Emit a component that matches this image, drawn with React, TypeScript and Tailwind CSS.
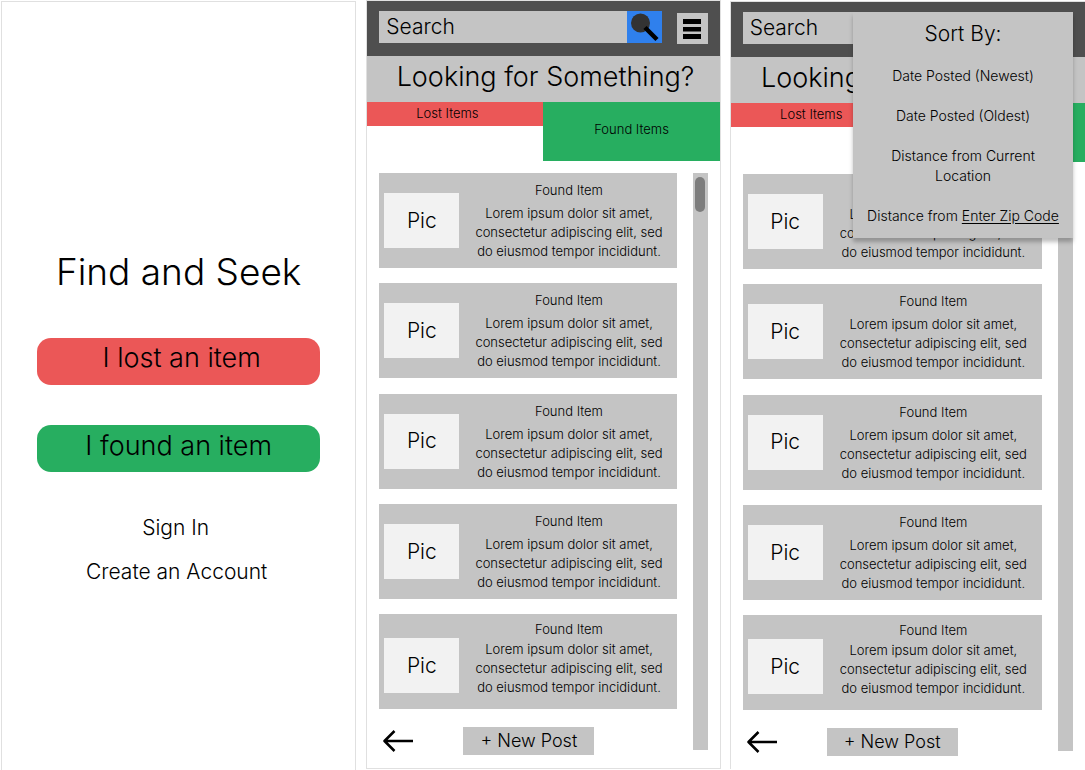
import type { ReactNode } from "react";

type Density = "regular" | "compact";

const items: { id: number; density: Density }[] = [
  { id: 1, density: "regular" },
  { id: 2, density: "regular" },
  { id: 3, density: "regular" },
  { id: 4, density: "regular" },
  { id: 5, density: "compact" },
];

function Frame({ label, className = "", children }: { label: string; className?: string; children: ReactNode }) {
  return (
    <section
      aria-label={label}
      className={`relative flex min-w-0 flex-col border-l border-t border-[#e0e0e0] bg-white ${className}`}
    >
      {children}
    </section>
  );
}

function SearchIcon() {
  return (
    <svg viewBox="0 0 35 32" className="h-8 w-[35px]" aria-hidden="true">
      <circle cx="13.500" cy="12" r="9.5" fill="#333333" />
      <path d="M18 16.500L30 28.500" stroke="#000000" strokeWidth="4.500" />
    </svg>
  );
}

function MenuIcon() {
  return (
    <svg viewBox="0 0 18 20" className="h-5 w-[18px]" aria-hidden="true">
      <path d="M0 0h18v5H0zM0 8h18v4.500H0zM0 15h18v5H0z" fill="#000000" />
    </svg>
  );
}

function BackIcon() {
  return (
    <svg
      viewBox="0 0 30 22"
      className="h-[22px] w-[30px]"
      fill="none"
      stroke="#000000"
      strokeWidth="2.500"
      strokeLinejoin="round"
      aria-hidden="true"
    >
      <path d="M30 11H1.500M11.500 1L1.500 11L11.500 21" />
    </svg>
  );
}

function ItemCard({ density }: { density: Density }) {
  const compact = density === "compact";
  return (
    <li className="flex h-[95px] items-start bg-[#c4c4c4] pl-[5px]">
      <div
        className={`flex h-[55px] w-[75px] shrink-0 items-center justify-center bg-[#f2f2f2] text-[21px] ${
          compact ? "mt-6" : "mt-5"
        }`}
      >
        Pic
      </div>
      <div className={`min-w-0 grow pl-0.5 text-center text-[13px] leading-[19px] ${compact ? "pt-1.5" : "pt-2"}`}>
        <h3>Found Item</h3>
        <p className={compact ? "mt-px" : "mt-1"}>
          Lorem ipsum dolor sit amet,
          <br />
          consectetur adipiscing elit, sed
          <br />
          do eiusmod tempor incididunt.
        </p>
      </div>
    </li>
  );
}

function Listing({ id, thumb }: { id: string; thumb: boolean }) {
  return (
    <>
      <header className="flex h-[55px] items-center bg-[#4f4f4f] px-3">
        <form className="mb-1 flex h-8 min-w-0 grow" role="search">
          <label htmlFor={id} className="sr-only">
            Search items
          </label>
          <input
            id={id}
            type="text"
            placeholder="Search"
            className="h-8 min-w-0 grow bg-[#c4c4c4] px-[7px] text-[21px] leading-8 font-light text-black outline-none placeholder:text-black placeholder:opacity-100"
          />
          <button type="button" aria-label="Search" className="shrink-0 bg-[#2f80ed]">
            <SearchIcon />
          </button>
        </form>
        <button
          type="button"
          aria-label="Sort options"
          className="ml-[15px] flex h-[31px] w-[31px] shrink-0 items-center justify-center bg-[#c4c4c4]"
        >
          <MenuIcon />
        </button>
      </header>
      <h2 className="flex h-[46px] items-center justify-center bg-[#c4c4c4] pb-1 pl-1 text-[27px] leading-8">
        Looking for Something?
      </h2>
      <div className="flex items-start text-[13px]">
        <button type="button" className="h-6 w-1/2 bg-[#eb5757] pr-4">
          Lost Items
        </button>
        <button type="button" className="h-[59px] w-1/2 bg-[#27ae60] pb-1">
          Found Items
        </button>
      </div>
      <div className="flex grow items-start gap-4 px-3 pb-3 pt-3">
        <div className="min-w-0 grow">
          <ul className="flex min-h-[536px] flex-col justify-between">
            {items.map((item) => (
              <ItemCard key={item.id} density={item.density} />
            ))}
          </ul>
          <div className="mt-[18px] flex items-center gap-[50px] pl-1">
            <button type="button" aria-label="Back">
              <BackIcon />
            </button>
            <button type="button" className="h-7 w-[131px] bg-[#c4c4c4] text-[18px] leading-7">
              + New Post
            </button>
          </div>
        </div>
        <div
          className="mb-1.5 flex w-[15px] shrink-0 justify-center self-stretch bg-[#c4c4c4] pt-1"
          aria-hidden="true"
        >
          {thumb && <div className="h-[35px] w-2.5 rounded-full bg-[#7d7d7d]" />}
        </div>
      </div>
    </>
  );
}

function SortMenu() {
  return (
    <div className="absolute right-3 top-2.5 flex w-[220px] flex-col items-center gap-5 bg-[#c4c4c4] pb-3 pt-2.5 text-center text-[14px] leading-5 shadow-[0_4px_4px_rgba(0,0,0,0.25)]">
      <h3 className="text-[21px] leading-6">Sort By:</h3>
      <button type="button">Date Posted (Newest)</button>
      <button type="button">Date Posted (Oldest)</button>
      <button type="button" className="px-6">
        Distance from Current Location
      </button>
      <p className="whitespace-nowrap">
        Distance from{" "}
        <a href="#zip" className="underline underline-offset-2">
          Enter Zip Code
        </a>
      </p>
    </div>
  );
}

export default function App() {
  return (
    <main className="grid min-h-screen grid-cols-3 gap-[9px] bg-white pl-px font-['Inter',sans-serif] font-light text-black">
      <Frame label="Welcome" className="mt-px items-center border-r px-[35px] pt-[246px]">
        <h1 className="text-[37px] leading-[48px]">Find and Seek</h1>
        <button type="button" className="mt-[42px] h-[47px] w-full rounded-[14px] bg-[#eb5757] pb-1.5 pl-1.5 text-[27px]">
          I lost an item
        </button>
        <button type="button" className="mt-10 h-[47px] w-full rounded-[14px] bg-[#27ae60] pb-1 text-[27px]">
          I found an item
        </button>
        <a href="#sign-in" className="mt-10 pr-1.5 text-[21px] leading-8">
          Sign In
        </a>
        <a href="#create-account" className="mt-3 pr-1 text-[21px] leading-8">
          Create an Account
        </a>
      </Frame>
      <Frame label="Found items" className="mb-px ml-px border-b border-r">
        <Listing id="search-items" thumb />
      </Frame>
      <Frame label="Found items with sort menu" className="mb-px mt-px">
        <Listing id="search-sorted-items" thumb={false} />
        <SortMenu />
      </Frame>
    </main>
  );
}
